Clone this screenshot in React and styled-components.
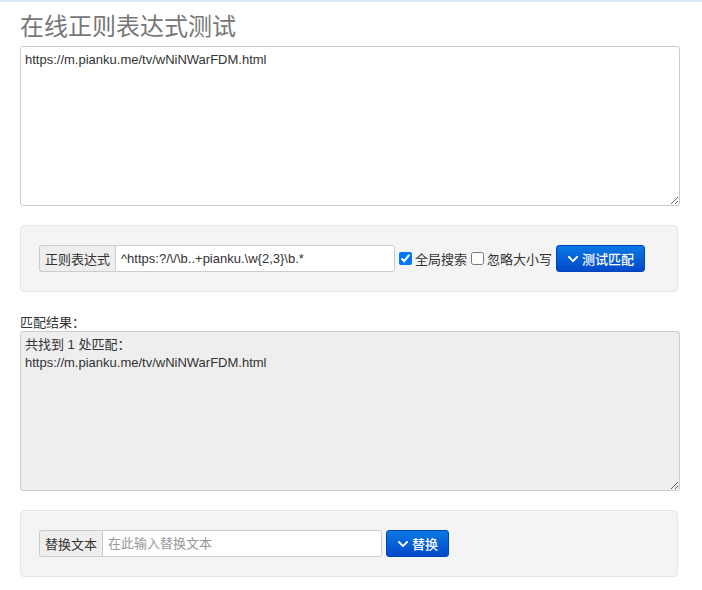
import React from 'react'
import styled, { createGlobalStyle } from 'styled-components'
import { FaChevronDown } from 'react-icons/fa'

const GlobalStyle = createGlobalStyle`
  body {
    margin: 0;
    background: #fff;
    font-family: "Liberation Sans", "Noto Sans CJK SC", sans-serif;
    font-size: 13px;
    color: #333;
  }
`

const Page = styled.div`
  border-top: 2px solid #d8eaf6;
  padding: 0 22px 0 20px;
`

const Title = styled.h2`
  margin: 0;
  padding-top: 11px;
  height: 33px;
  font-size: 24px;
  line-height: 28px;
  font-weight: normal;
  color: #777;
`

const Area = styled.textarea`
  display: block;
  box-sizing: border-box;
  width: 660px;
  height: 160px;
  margin: 0;
  padding: 4px 4px;
  border: 1px solid #ccc;
  border-radius: 3px;
  background: ${p => (p.$readonly ? '#eee' : '#fff')};
  font-family: inherit;
  font-size: 13px;
  line-height: 18px;
  color: #333;
  resize: vertical;
  outline: none;
`

const Well = styled.div`
  box-sizing: border-box;
  width: 658px;
  margin: ${p => p.$top}px 0 0;
  padding: 19px 18px;
  height: 67px;
  background: #f4f4f4;
  border: 1px solid #e6e6e6;
  border-radius: 4px;
  display: flex;
  align-items: center;
  gap: 4px;
`

const Group = styled.div`
  display: flex;
  height: 27px;
`

const Addon = styled.span`
  display: flex;
  align-items: center;
  padding: 0 5px;
  background: #eee;
  border: 1px solid #ccc;
  border-right: none;
  border-radius: 3px 0 0 3px;
  color: #333;
  white-space: nowrap;
`

const Input = styled.input`
  box-sizing: border-box;
  width: 280px;
  height: 27px;
  margin: 0;
  padding: 0 5px;
  border: 1px solid #ccc;
  border-radius: 0 3px 3px 0;
  background: #fff;
  font-family: inherit;
  font-size: 13px;
  color: #333;
  outline: none;

  &::placeholder {
    color: #999;
  }
`

const Check = styled.label`
  display: flex;
  align-items: center;
  gap: 3px;
  color: #333;

  input {
    margin: 0;
    width: 13px;
    height: 13px;
  }
`

const Button = styled.button`
  display: flex;
  align-items: center;
  gap: 3px;
  height: 27px;
  padding: 0 10px;
  border: 1px solid #0045b8;
  border-radius: 3px;
  background: linear-gradient(to bottom, #0a79e4, #0349c9);
  color: #fff;
  font-family: inherit;
  font-size: 13px;
  font-weight: 500;
  cursor: pointer;

  svg {
    width: 12px;
    height: 12px;
  }
`

const Label = styled.div`
  margin-top: 22px;
  height: 17px;
  line-height: 17px;
  color: #333;
`

function App() {
  return (
    <Page>
      <GlobalStyle />
      <Title>在线正则表达式测试</Title>
      <Area defaultValue="https://m.pianku.me/tv/wNiNWarFDM.html" />
      <Well $top={19}>
        <Group>
          <Addon>正则表达式</Addon>
          <Input defaultValue="^https:?/\/\b..+pianku.\w{2,3}\b.*" />
        </Group>
        <Check><input type="checkbox" defaultChecked />全局搜索</Check>
        <Check><input type="checkbox" />忽略大小写</Check>
        <Button><FaChevronDown />测试匹配</Button>
      </Well>
      <Label>匹配结果：</Label>
      <Area $readonly readOnly defaultValue={'共找到 1 处匹配：\nhttps://m.pianku.me/tv/wNiNWarFDM.html'} />
      <Well $top={19}>
        <Group>
          <Addon>替换文本</Addon>
          <Input placeholder="在此输入替换文本" />
        </Group>
        <Button><FaChevronDown />替换</Button>
      </Well>
    </Page>
  )
}

export default App
